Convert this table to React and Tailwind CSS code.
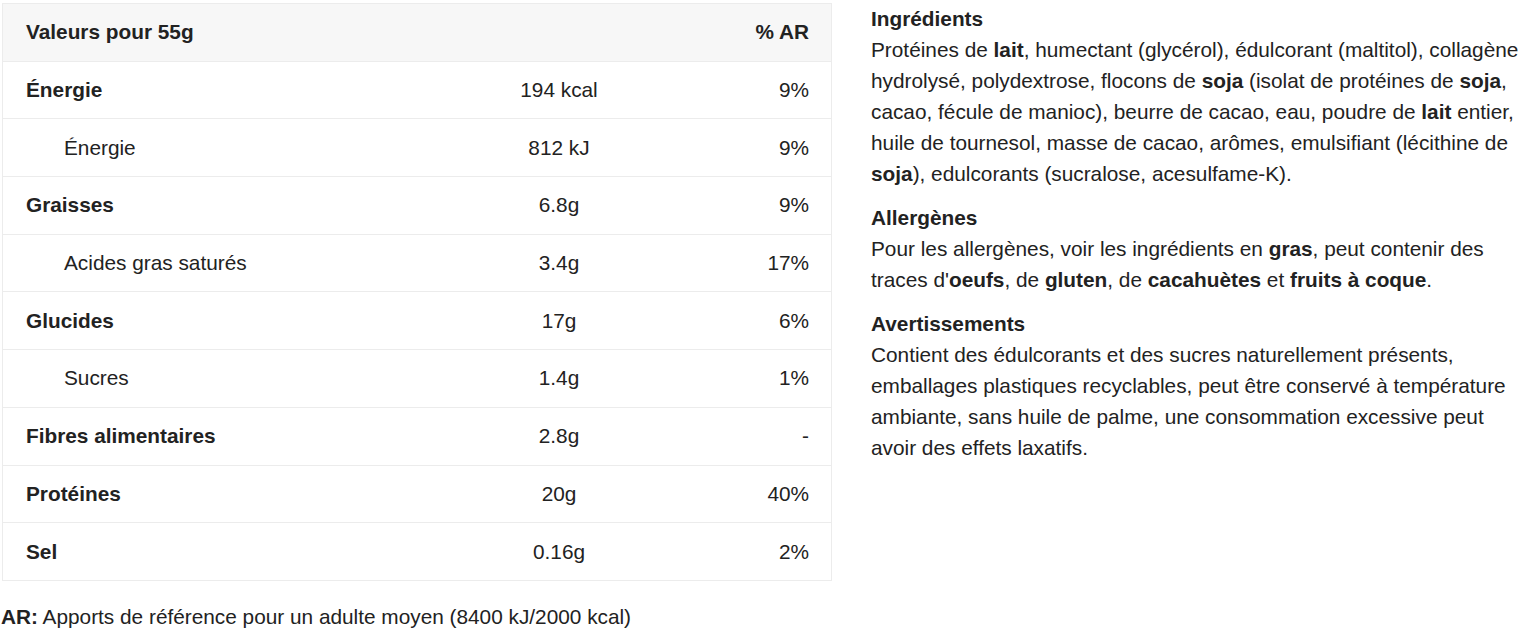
const rows = [
  { label: 'Énergie', value: '194 kcal', ar: '9%', bold: true },
  { label: 'Énergie', value: '812 kJ', ar: '9%' },
  { label: 'Graisses', value: '6.8g', ar: '9%', bold: true },
  { label: 'Acides gras saturés', value: '3.4g', ar: '17%' },
  { label: 'Glucides', value: '17g', ar: '6%', bold: true },
  { label: 'Sucres', value: '1.4g', ar: '1%' },
  { label: 'Fibres alimentaires', value: '2.8g', ar: '-', bold: true },
  { label: 'Protéines', value: '20g', ar: '40%', bold: true },
  { label: 'Sel', value: '0.16g', ar: '2%', bold: true },
];

function Row({ label, value, ar, bold }) {
  return (
    <div className="grid grid-cols-[443px_226px_1fr] h-[57.7px] items-center border-t border-[#ececec]">
      <div className={bold ? 'pl-[23px] font-bold' : 'pl-[61px]'}>{label}</div>
      <div className="text-center">{value}</div>
      <div className="text-right pr-[22px]">{ar}</div>
    </div>
  );
}

function Section({ title, children }) {
  return (
    <div className="mb-[13px]">
      <h3 className="font-bold">{title}</h3>
      <p>{children}</p>
    </div>
  );
}

export default function App() {
  return (
    <div className="pt-[3px] pl-[2px] text-[20.8px] text-[#222] font-['Liberation_Sans',Arial,sans-serif] bg-white min-h-screen">
      <div className="flex gap-[39px]">
        <div className="w-[830px] shrink-0">
          <div className="border border-[#ececec] leading-[24px]">
            <div className="grid grid-cols-[443px_226px_1fr] h-[56.7px] items-center bg-[#f7f7f7] font-bold">
              <div className="pl-[23px]">Valeurs pour 55g</div>
              <div></div>
              <div className="text-right pr-[22px]">% AR</div>
            </div>
            {rows.map((r, i) => (
              <Row key={i} {...r} />
            ))}
          </div>
          <p className="mt-[20px] leading-[31px] -ml-px">
            <b>AR:</b> Apports de référence pour un adulte moyen (8400 kJ/2000 kcal)
          </p>
        </div>
        <div className="flex-1 leading-[31px] pr-[4px]">
          <Section title="Ingrédients">
            Protéines de <b>lait</b>, humectant (glycérol), édulcorant (maltitol), collagène hydrolysé, polydextrose, flocons de <b>soja</b> (isolat de protéines de <b>soja</b>, cacao, fécule de manioc), beurre de cacao, eau, poudre de <b>lait</b> entier, huile de tournesol, masse de cacao, arômes, emulsifiant (lécithine de <b>soja</b>), edulcorants (sucralose, acesulfame-K).
          </Section>
          <Section title="Allergènes">
            Pour les allergènes, voir les ingrédients en <b>gras</b>, peut contenir des traces d'<b>oeufs</b>, de <b>gluten</b>, de <b>cacahuètes</b> et <b>fruits à coque</b>.
          </Section>
          <Section title="Avertissements">
            Contient des édulcorants et des sucres naturellement présents, emballages plastiques recyclables, peut être conservé à température ambiante, sans huile de palme, une consommation excessive peut avoir des effets laxatifs.
          </Section>
        </div>
      </div>
    </div>
  );
}
